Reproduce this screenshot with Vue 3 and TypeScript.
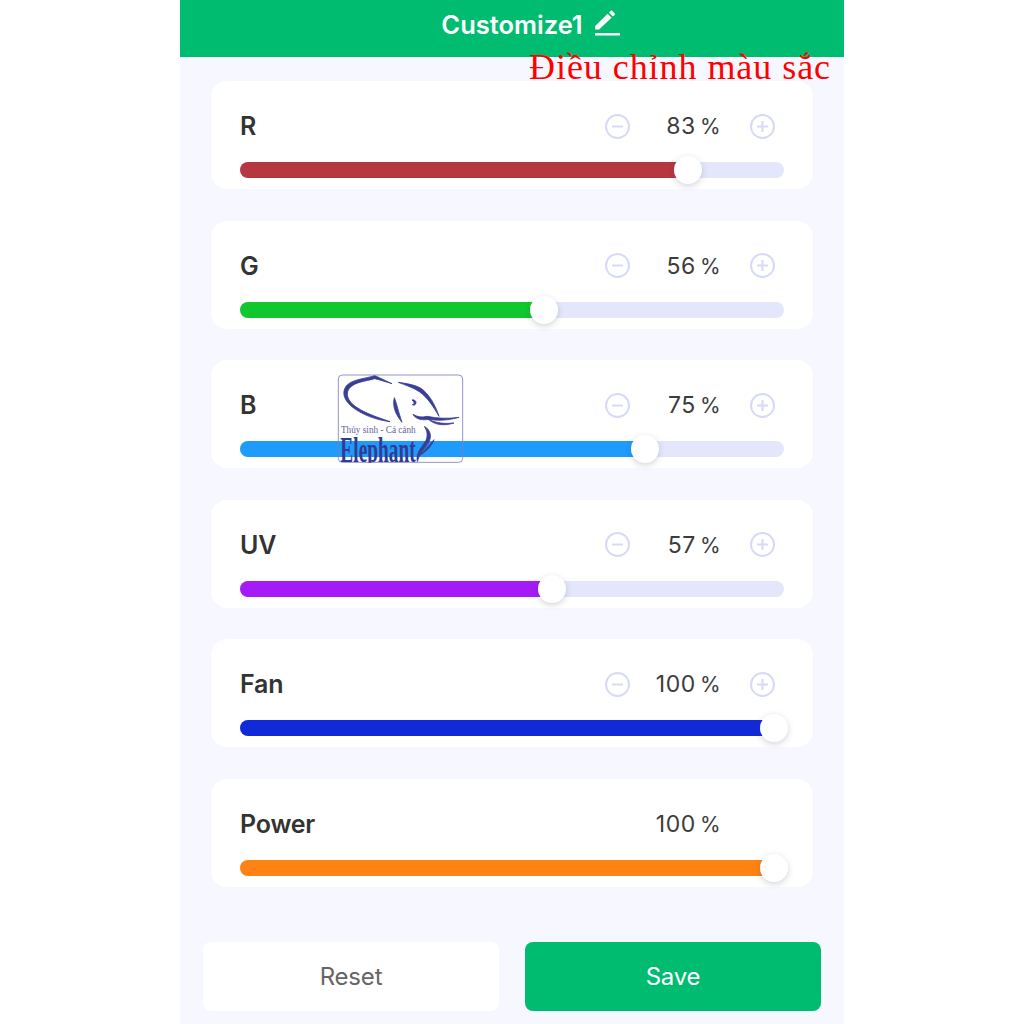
<script setup lang="ts">
interface Channel {
  name: string
  value: number
  color: string
  stop: number
  steppers: boolean
}

const trackWidth = 544

const channels: Channel[] = [
  { name: 'R', value: 83, color: '#b5373f', stop: 448, steppers: true },
  { name: 'G', value: 56, color: '#10c72f', stop: 304, steppers: true },
  { name: 'B', value: 75, color: '#1e9bfb', stop: 405, steppers: true },
  { name: 'UV', value: 57, color: '#a51bf5', stop: 312, steppers: true },
  { name: 'Fan', value: 100, color: '#1229d8', stop: 534, steppers: true },
  { name: 'Power', value: 100, color: '#ff8313', stop: 534, steppers: false },
]

function fillWidth(c: Channel): string {
  return `${c.value === 100 ? trackWidth : c.stop}px`
}
</script>

<template>
  <div class="phone">
    <header class="header">
      <span class="title">Customize1</span>
      <svg class="pencil" width="28" height="33" viewBox="0 0 28 33" aria-hidden="true">
        <path d="M2.2 21.6V18L14.6 5.8l4 4L6 21.6z" fill="#fff" />
        <path d="M15.9 4.5l1.7-1.6c.5-.5 1.1-.5 1.6 0l2.4 2.4c.5.5.5 1.1 0 1.6l-1.7 1.6z" fill="#fff" />
        <rect x="2" y="25.1" width="25" height="2.4" fill="#fff" />
      </svg>
    </header>

    <main class="list">
      <section v-for="c in channels" :key="c.name" class="card">
        <div class="row">
          <span class="label">{{ c.name }}</span>
          <svg class="step" :class="{ hidden: !c.steppers }" width="25" height="25" viewBox="0 0 25 25" aria-hidden="true">
            <circle cx="12.5" cy="12.5" r="11.5" />
            <path d="M7 12.5h11" />
          </svg>
          <span class="value">{{ c.value }}<span class="unit">%</span></span>
          <svg class="step" :class="{ hidden: !c.steppers }" width="25" height="25" viewBox="0 0 25 25" aria-hidden="true">
            <circle cx="12.5" cy="12.5" r="11.5" />
            <path d="M7 12.5h11M12.5 7v11" />
          </svg>
        </div>
        <div class="track">
          <div class="fill" :style="{ width: fillWidth(c), background: c.color }"></div>
          <div class="thumb" :style="{ left: `${c.stop}px` }"></div>
        </div>
      </section>
    </main>

    <footer class="actions">
      <button class="btn reset" type="button">Reset</button>
      <button class="btn save" type="button">Save</button>
    </footer>

    <div class="caption">Điều chỉnh màu sắc</div>

    <svg class="logo" width="140" height="105" viewBox="0 0 420 315">
      <defs>
        <clipPath id="logo-box">
          <rect x="25" y="30" width="373" height="263" />
        </clipPath>
      </defs>
      <rect x="25" y="30" width="373" height="262" rx="12" fill="none" stroke="#7b7fbb" stroke-width="2.5" />
      <g fill="#3a3f96" stroke="#3a3f96" stroke-width="2.5" stroke-linejoin="round">
        <path d="M180 170C140 165 96 150 64 124 40 102 36 82 48 64 62 44 100 42 134 32c12 4 26 12 52 24-21-6-36-12-52-15-30 9-58 9-76 29-10 14-8 30 10 48 28 24 72 38 112 52z" />
        <path d="M205 52c20 3 45 6 65 16 26 16 46 52 57 86-17-29-32-54-59-74-18-12-43-20-63-28z" />
        <path d="M193 98c7 17 12 42 23 74-18-22-30-47-23-74z" />
        <path d="M246 105c7-2 13 3 12 9-1 6-7 8-11 5 4-1 6-3 5-6-1-3-3-6-6-8z" />
        <path d="M249 148c13 8 26 10 43 6 28 6 58 8 95 3-32 9-62 11-90 6-17 3-39 2-48-15z" />
        <path d="M292 160c18 12 43 18 80 14-32 10-60 6-80-14z" />
        <path d="M283 184c19 11 23 31 13 48-11 18-28 33-34 58-6-28 16-45 26-64 6-14 4-28-5-42z" />
        <path d="M312 224c-7 21-27 38-44 48 14-14 28-30 44-48z" />
      </g>
      <text x="33" y="204" font-family="Liberation Serif, serif" font-size="29" fill="#5f6396" textLength="224" lengthAdjust="spacingAndGlyphs">Thủy sinh - Cá cảnh</text>
      <text x="31" y="290" clip-path="url(#logo-box)" font-family="Liberation Serif, serif" font-weight="700" font-size="106" fill="#343a92" textLength="226" lengthAdjust="spacingAndGlyphs">Elephant</text>
    </svg>
  </div>
</template>

<style scoped>
.phone {
  position: relative;
  width: 664px;
  height: 1024px;
  margin: 0 auto;
  background: #f7f8ff;
  overflow: hidden;
  font-family: Inter, "Noto Sans", sans-serif;
}

.header {
  height: 57px;
  padding: 0 0 8px 38px;
  box-sizing: border-box;
  background: #00bc70;
  color: #fff;
  display: flex;
  align-items: center;
  justify-content: center;
  gap: 10px;
}

.title {
  font-size: 25.5px;
  font-weight: 600;
}

.pencil {
  display: block;
}

.list {
  padding: 24px 31px 0;
  display: flex;
  flex-direction: column;
  gap: 31.6px;
}

.card {
  height: 108px;
  box-sizing: border-box;
  padding: 31px 29px 0;
  background: #fff;
  border-radius: 16px;
}

.row {
  height: 28px;
  padding-right: 9.5px;
  display: flex;
  align-items: center;
}

.label {
  flex: 1;
  font-size: 25px;
  font-weight: 600;
  color: #333;
  letter-spacing: -0.2px;
}

.step {
  display: block;
  fill: none;
  stroke: #d6d9f8;
  stroke-width: 2;
}

.step.hidden {
  visibility: hidden;
}

.value {
  width: 91px;
  margin-right: 29px;
  text-align: right;
  font-size: 23px;
  letter-spacing: 0.6px;
  color: #3c3c3c;
}

.unit {
  margin-left: 4px;
  font-size: 21px;
  letter-spacing: 0;
}

.track {
  position: relative;
  height: 16px;
  margin-top: 22px;
  background: #e4e6fb;
  border-radius: 8px;
}

.fill {
  height: 100%;
  border-radius: 8px;
}

.thumb {
  position: absolute;
  top: -6px;
  width: 28px;
  height: 28px;
  margin-left: -14px;
  border-radius: 50%;
  background: #fff;
  box-shadow: 0 2px 6px rgba(60, 60, 90, 0.22);
}

.actions {
  position: absolute;
  left: 23px;
  right: 23px;
  bottom: 13px;
  display: grid;
  grid-template-columns: 296px 296px;
  gap: 26px;
}

.btn {
  height: 69px;
  border: 0;
  border-radius: 8px;
  font-family: inherit;
  font-size: 24px;
  letter-spacing: -0.2px;
}

.reset {
  background: #fff;
  color: #666;
}

.save {
  background: #00bc70;
  color: #fff;
  font-weight: 400;
}

.caption {
  position: absolute;
  left: 349px;
  top: 46px;
  font-family: "Liberation Serif", "Times New Roman", serif;
  font-size: 36px;
  line-height: 42px;
  letter-spacing: 0.95px;
  color: #ff0000;
  white-space: nowrap;
}

.logo {
  position: absolute;
  left: 150px;
  top: 365px;
}
</style>
